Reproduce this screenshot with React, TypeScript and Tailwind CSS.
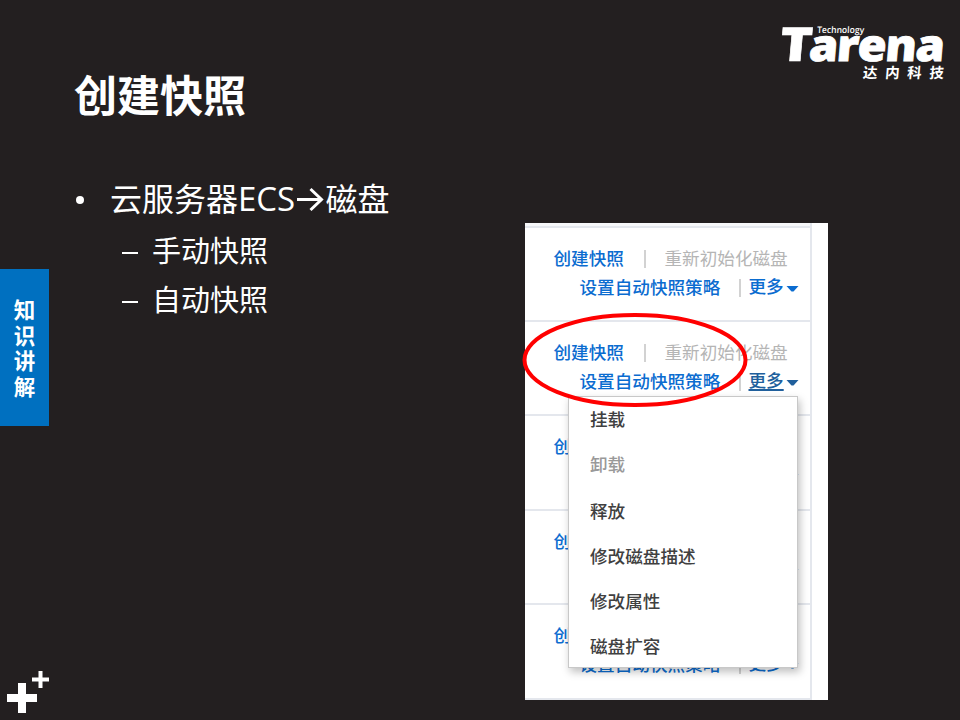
const CJK = "font-['Open_Sans','Noto_Sans_CJK_SC',sans-serif]";

function Logo() {
  return (
    <svg width="176" height="62" viewBox="0 0 176 62" className="block overflow-visible" fill="#fff">
      <g transform="translate(0 38) skewX(-5)" stroke="#fff" className="font-['Open_Sans',sans-serif] font-extrabold">
        <text transform="scale(1.16 1)" x="-0.300" y="0" fontSize="47" strokeWidth="0.600">T</text>
        <text transform="scale(1.07 1)" x="27" y="0" fontSize="44" strokeWidth="0.800" textLength="127" lengthAdjust="spacing">arena</text>
      </g>
      <g transform="translate(0 9.500) skewX(-3)">
        <text x="38" y="0" fontSize="9" textLength="47" lengthAdjust="spacingAndGlyphs" className="font-['Open_Sans',sans-serif] font-semibold">Technology</text>
      </g>
      <g transform="translate(0 54.500) skewX(-5)" className="font-['Noto_Sans_CJK_SC',sans-serif] font-bold">
        <text x="83.500" y="0" fontSize="14.500" textLength="81" lengthAdjust="spacing">达内科技</text>
      </g>
    </svg>
  );
}

function DiskRow({ active = false }: { active?: boolean }) {
  return (
    <div className="h-[94.4px] w-full shrink-0 border-b-2 border-[#e4e7ed] pl-[28.5px] pt-[16px] text-[17.6px] leading-[29px] font-medium whitespace-nowrap text-[#0b6cd0]">
      <div className="flex">
        <span className="w-[90px]">创建快照</span>
        <span className="mt-[6px] h-[18px] w-[2px] bg-[#d2d2d2]" />
        <span className="ml-[19px] font-normal text-[#b5b5b5]">重新初始化磁盘</span>
      </div>
      <div className="flex pl-[26px]">
        <span className="w-[159px]">设置自动快照策略</span>
        <span className="mt-[6px] h-[18px] w-[2px] bg-[#d2d2d2]" />
        <span className={active ? "mt-[-1px] ml-[8px] text-[#205f9c] underline decoration-2 underline-offset-2" : "mt-[-1px] ml-[8px] text-[#0b6cd0]"}>更多</span>
        <svg width="13" height="29" viewBox="0 0 13 29" className="ml-[2px]" fill={active ? "#205f9c" : "#0b6cd0"}>
          <path d="M0.500 13H12.500L7.500 18.500H5.500Z" />
        </svg>
      </div>
    </div>
  );
}

const menu = [
  { label: "挂载", h: "h-[45px]" },
  { label: "卸载", h: "h-[46.500px]" },
  { label: "释放", h: "h-[45.500px]" },
  { label: "修改磁盘描述", h: "h-[45px]" },
  { label: "修改属性", h: "h-[45px]" },
  { label: "磁盘扩容", h: "h-[30px]" },
];

export default function App() {
  return (
    <div className={`flex h-[720px] w-[960px] overflow-hidden bg-[#231f20] text-white ${CJK}`}>
      <aside className="flex w-[49px] shrink-0 flex-col justify-between pt-[269px]">
        <div className="flex h-[157px] flex-col items-center bg-[#0070c0] pt-[28px] text-[21.500px] leading-[25.500px] font-bold">
          {["知", "识", "讲", "解"].map((c) => (
            <span key={c}>{c}</span>
          ))}
        </div>
        <svg width="50" height="50" viewBox="0 0 50 50" fill="#fff">
          <path d="M18 13h8v11h11v8H26v11h-8V32H7v-8h11zM38.500 1h4v6.500H49v4h-6.500V18h-4v-6.500H32v-4h6.500z" />
        </svg>
      </aside>

      <main className="w-[476px] shrink-0 pt-[64px]">
        <h1 className="pl-[25px] text-[43px] leading-[64px] font-bold">创建快照</h1>
        <div className="mt-[47px] flex h-[48px] items-center text-[32px] leading-[48px]">
          <span className="mt-[2px] mr-[26px] ml-[27px] size-[8px] rounded-full bg-white" />
          <span className="whitespace-nowrap">云服务器</span>
          <span className="inline-block origin-left scale-x-[1.03]">ECS</span>
          <svg width="29" height="30" viewBox="0 0 29 30" fill="none" stroke="#fff" strokeWidth="3" className="ml-[2px]">
            <path d="M1 15.500H25M14.500 5L25.500 15.500L14.500 26" />
          </svg>
          <span className="ml-[1px]">磁盘</span>
        </div>
        <div className="mt-[3px]">
          {["手动快照", "自动快照"].map((t) => (
            <div key={t} className="flex h-[49px] items-center text-[29px] leading-[49px]">
              <span className="mt-[4px] mr-[14px] ml-[73px] h-[2px] w-[16px] bg-white" />
              <span>{t}</span>
            </div>
          ))}
        </div>
      </main>

      <section className="flex w-[435px] shrink-0 flex-col">
        <div className="h-[223px] pt-[23px] pl-[254px]">
          <Logo />
        </div>
        <div className="relative h-[477px] w-[303px] bg-white">
          <div className="h-[477px] w-[287px] overflow-hidden border-r-2 border-[#e4e7ed]">
            <div className="h-[4.600px] border-b-2 border-[#e4e7ed] bg-[#f7f8fa]" />
            <DiskRow />
            <DiskRow active />
            <DiskRow />
            <DiskRow />
            <DiskRow />
          </div>
          <ul className="absolute top-[173px] left-[43px] h-[272px] w-[230px] border border-[#c8c8c8] bg-white pt-[7px] pl-[21px] text-[17.600px] leading-[30px] font-medium text-[#404040] shadow-[2px_4px_8px_rgba(0,0,0,0.25)]">
            {menu.map((m) => (
              <li key={m.label} className={m.label === "卸载" ? `${m.h} text-[#999]` : m.h}>
                {m.label}
              </li>
            ))}
          </ul>
          <svg width="226" height="96" viewBox="0 0 226 96" className="absolute top-[89px] left-[-3px]" fill="none" stroke="#f00" strokeWidth="4">
            <ellipse cx="113" cy="48" rx="110.500" ry="45" />
          </svg>
        </div>
      </section>
    </div>
  );
}
